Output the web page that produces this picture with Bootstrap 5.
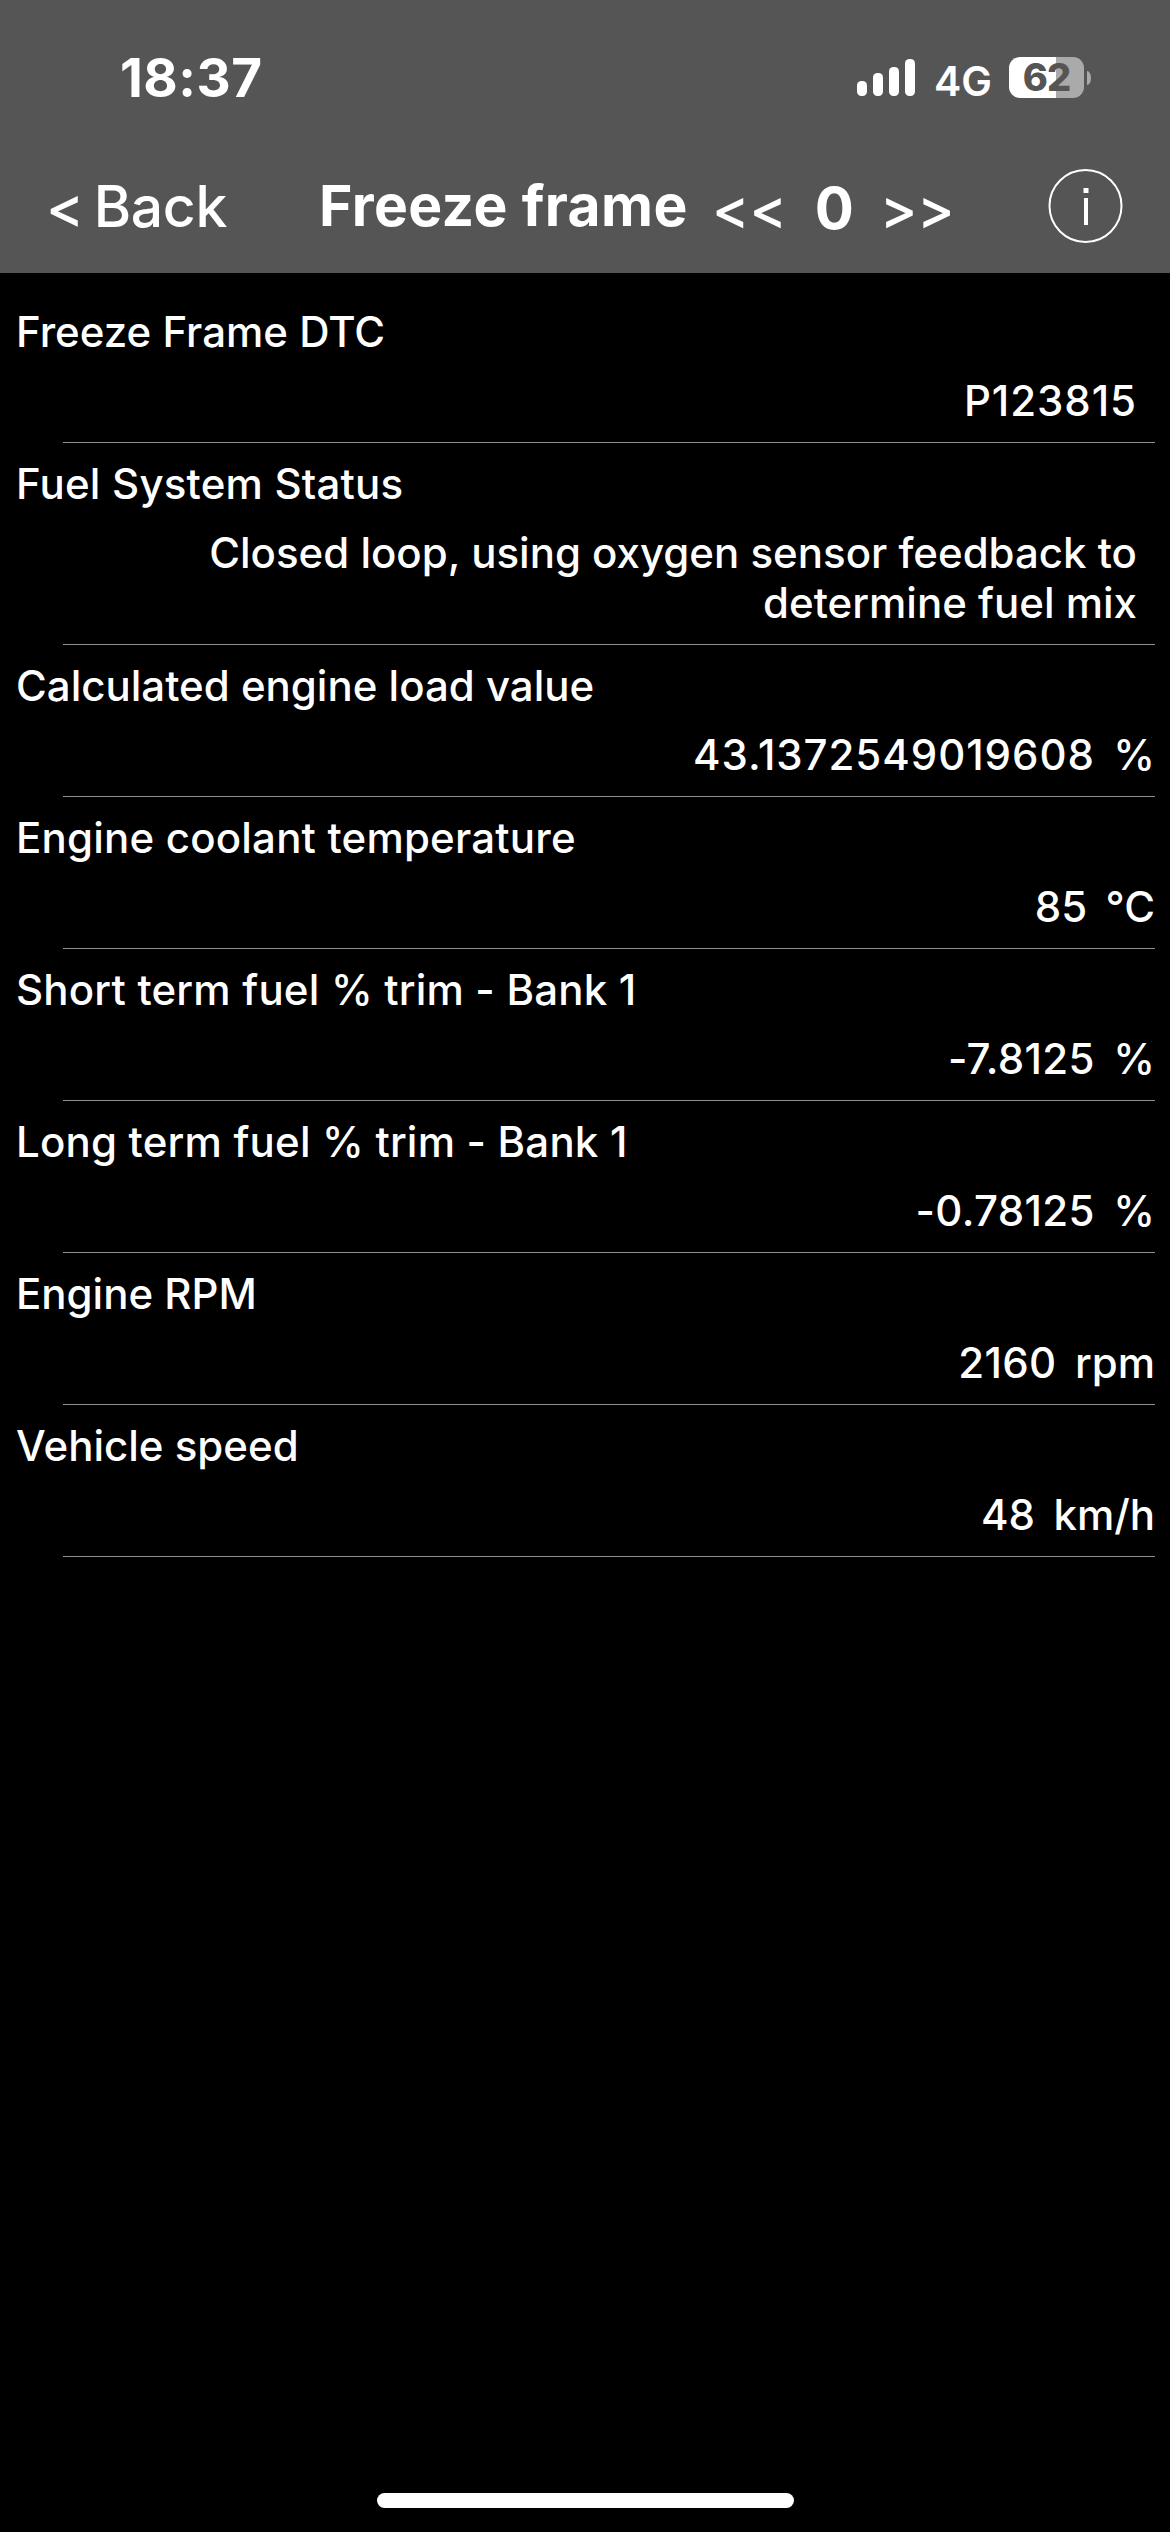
<!DOCTYPE html>
<html lang="en"><head><meta charset="utf-8"><title>Freeze frame</title>
<link rel="stylesheet" href="https://cdn.jsdelivr.net/npm/bootstrap@5.3.0/dist/css/bootstrap.min.css">
<style>
html,body{background:#000;margin:0}
body{font-family:Inter,"Liberation Sans",sans-serif;color:#fff;width:1170px;height:2532px}
.app-shell{height:2532px}
.top-area{background:#555;height:273px;flex:none}
.status-row{height:145px;padding:0 79px 0 120px}
.clock{font-size:53px;font-weight:700;line-height:1;margin-top:52px;letter-spacing:.5px}
.status-icons{margin-top:57px;gap:19px}
.net-label{font-size:41px;font-weight:600;line-height:1;margin-top:4px;width:56px;white-space:nowrap}
.batt{width:75px;height:41px;border-radius:11px;background:linear-gradient(90deg,#fff 0 47px,#aaa 47px);color:#555;font-size:38px;font-weight:800;line-height:41px;text-align:center;letter-spacing:-1px}
.nav-row{padding:0 47px 0 46px;height:128px}
.back-link{font-size:57px;font-weight:500;line-height:1;margin-top:33px;width:273px;white-space:nowrap;word-spacing:-5px;letter-spacing:-.3px}
.frame-title{font-size:57px;font-weight:700;line-height:1;margin-top:32px;letter-spacing:.4px;white-space:nowrap;width:393px}
.frame-nav{font-size:56px;font-weight:500;line-height:1;margin-top:34px;white-space:nowrap}
.frame-no{font-weight:700;font-size:58px;margin:0 26px 0 28px}
.info-btn{width:75px;height:74px;margin-top:24px;margin-left:auto}
.rows-list{padding-top:18px}
.data-row{height:151px;padding:0 15px 0 16px}
.data-row.tall{height:201px}
.row-label{font-size:42px;font-weight:500;line-height:50px;padding-top:16px;white-space:nowrap}
.row-label.spaced{letter-spacing:.2px}
.row-value{font-size:42px;font-weight:500;line-height:50px;text-align:right;margin-top:19px;white-space:nowrap;word-spacing:-2px}
.row-value.inset{padding-right:18px;word-spacing:0}
.num-wide{letter-spacing:.95px}
.num-mid{letter-spacing:.35px}
.row-sep{height:1px;background:#8e8e8e;margin-left:63px;margin-right:15px}
.home-bar{width:417px;height:15px;border-radius:8px;background:#fff;margin:0 auto 24px}
</style></head>
<body>
<div class="app-shell d-flex flex-column">
  <header class="top-area">
    <div class="status-row d-flex justify-content-between align-items-start">
      <div class="clock">18:37</div>
      <div class="status-icons d-flex align-items-start">
        <svg width="58" height="38" viewBox="0 0 58 38" fill="#fff" style="margin-top:2px"><rect x="0" y="22" width="10" height="15" rx="4.500"/><rect x="16" y="14" width="10" height="23" rx="4.500"/><rect x="32" y="8" width="10" height="29" rx="4.500"/><rect x="48" y="0" width="10" height="37" rx="4.500"/></svg>
        <div class="net-label">4G</div>
        <div class="d-flex align-items-center" style="gap:3px">
          <div class="batt">62</div>
          <svg width="4" height="14" viewBox="0 0 4 14" fill="#aaa"><path d="M0 0a4 7 0 0 1 0 14z"/></svg>
        </div>
      </div>
    </div>
    <nav class="nav-row d-flex align-items-start">
      <div class="back-link">&lt; Back</div>
      <div class="frame-title">Freeze frame</div>
      <div class="frame-nav">&lt;&lt;<span class="frame-no">0</span>&gt;&gt;</div>
      <svg class="info-btn" viewBox="0 0 75 74" fill="none" stroke="#fff"><circle cx="37.500" cy="37" r="36" stroke-width="2"/><rect x="35.500" y="19" width="5" height="5" fill="#fff" stroke="none"/><rect x="36" y="29" width="4" height="27" fill="#fff" stroke="none"/></svg>
    </nav>
  </header>
  <main class="rows-list flex-grow-1">
    <div class="data-row"><div class="row-label">Freeze Frame DTC</div><div class="row-value inset"><span class="num-wide">P123815</span></div></div>
    <div class="row-sep"></div>
    <div class="data-row tall"><div class="row-label spaced">Fuel System Status</div><div class="row-value inset">Closed loop, using oxygen sensor feedback to<br>determine fuel mix</div></div>
    <div class="row-sep"></div>
    <div class="data-row"><div class="row-label">Calculated engine load value</div><div class="row-value"><span class="num-wide">43.1372549019608</span>&nbsp; %</div></div>
    <div class="row-sep"></div>
    <div class="data-row"><div class="row-label spaced">Engine coolant temperature</div><div class="row-value">85&nbsp; °C</div></div>
    <div class="row-sep"></div>
    <div class="data-row"><div class="row-label spaced">Short term fuel % trim - Bank 1</div><div class="row-value"><span class="num-mid">-7.8125</span>&nbsp; %</div></div>
    <div class="row-sep"></div>
    <div class="data-row"><div class="row-label spaced">Long term fuel % trim - Bank 1</div><div class="row-value"><span class="num-mid">-0.78125</span>&nbsp; %</div></div>
    <div class="row-sep"></div>
    <div class="data-row"><div class="row-label">Engine RPM</div><div class="row-value"><span class="num-mid">2160</span>&nbsp; rpm</div></div>
    <div class="row-sep"></div>
    <div class="data-row"><div class="row-label">Vehicle speed</div><div class="row-value">48&nbsp; km/h</div></div>
    <div class="row-sep"></div>
  </main>
  <div class="home-bar"></div>
</div>
<script src="https://cdn.jsdelivr.net/npm/bootstrap@5.3.0/dist/js/bootstrap.bundle.min.js"></script>
</body></html>
